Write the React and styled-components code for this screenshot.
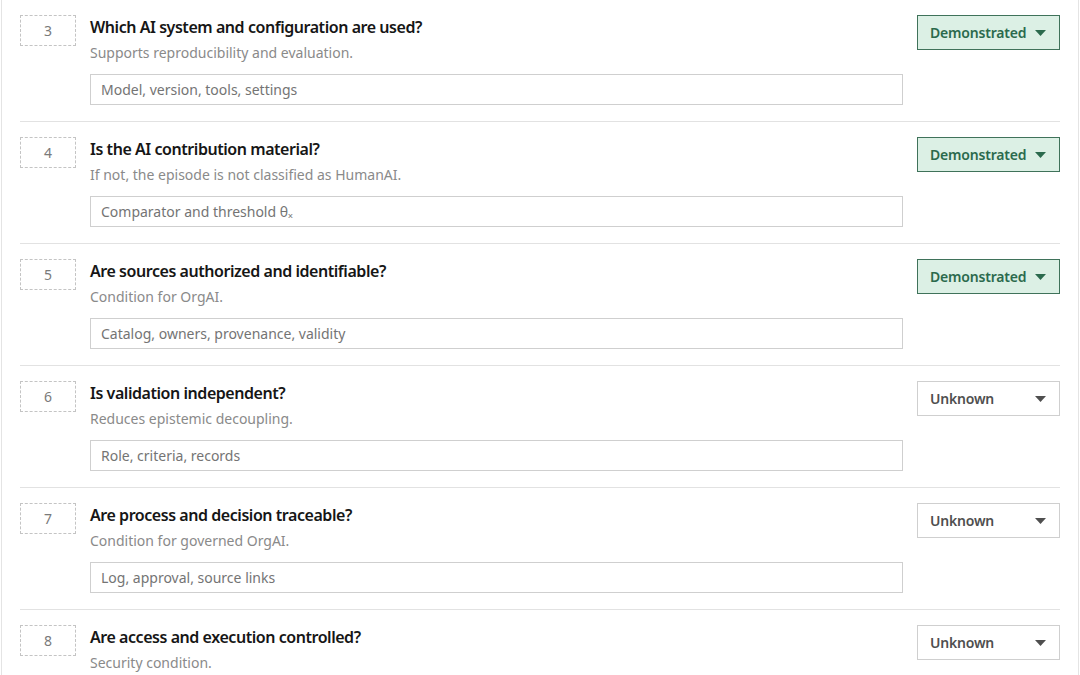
import React from "react";
import styled, { createGlobalStyle, css } from "styled-components";

const Global = createGlobalStyle`
  html, body { margin: 0; padding: 0; background: #ffffff; }
  body { font-family: "Noto Sans", "Open Sans", sans-serif; color: #161616; }
  * { box-sizing: border-box; }
`;

const Page = styled.div`
  width: 1080px;
  height: 675px;
  overflow: hidden;
  padding-left: 1px;
  padding-right: 1px;
`;

const Card = styled.section`
  border-left: 1px solid #e4e4e4;
  border-right: 1px solid #e4e4e4;
  padding: 0 18px;
  min-height: 675px;
`;

const Row = styled.div`
  display: grid;
  grid-template-columns: 56px 1fr 143px;
  column-gap: 14px;
  padding: 15px 0 16px;
  border-bottom: 1px solid #e2e2e2;
`;

const NumberBox = styled.div`
  height: 31px;
  border: 1px dashed #c4c4c4;
  display: flex;
  align-items: center;
  justify-content: center;
  font-size: 14px;
  color: #7a7a7a;
`;

const Body = styled.div`
  display: flex;
  flex-direction: column;
`;

const Title = styled.h3`
  margin: 0;
  font-size: 16px;
  line-height: 24px;
  font-weight: 600;
  letter-spacing: -0.45px;
  color: #161616;
`;

const Hint = styled.p`
  margin: 4px 0 0;
  font-size: 14px;
  line-height: 20px;
  color: #8a8a8a;
`;

const TextField = styled.input`
  margin-top: 11px;
  height: 31px;
  width: 100%;
  border: 1px solid #cfcfcf;
  background: #fff;
  padding: 0 10px;
  font-family: inherit;
  font-size: 14px;
  color: #161616;
  outline: none;
  &::placeholder { color: #747474; }
`;

const StatusSelect = styled.button`
  height: 35px;
  display: flex;
  align-items: center;
  justify-content: space-between;
  padding: 0 13px 0 12px;
  font-family: inherit;
  font-size: 14px;
  font-weight: 600;
  letter-spacing: -0.2px;
  cursor: pointer;
  ${({ $status }) =>
    $status === "demonstrated"
      ? css`
          background: #dcf0e5;
          border: 1px solid #3f725a;
          color: #2b6a4d;
        `
      : css`
          background: #ffffff;
          border: 1px solid #cfcfcf;
          color: #4f4f4f;
        `}
`;

const Caret = ({ color }) => (
  <svg width="11" height="6" viewBox="0 0 11 6" aria-hidden="true">
    <path d="M0 0 L11 0 L5.5 6 Z" fill={color} />
  </svg>
);

const items = [
  { n: 3, title: "Which AI system and configuration are used?", hint: "Supports reproducibility and evaluation.", ph: "Model, version, tools, settings", status: "demonstrated" },
  { n: 4, title: "Is the AI contribution material?", hint: "If not, the episode is not classified as HumanAI.", ph: "Comparator and threshold θₓ", status: "demonstrated" },
  { n: 5, title: "Are sources authorized and identifiable?", hint: "Condition for OrgAI.", ph: "Catalog, owners, provenance, validity", status: "demonstrated" },
  { n: 6, title: "Is validation independent?", hint: "Reduces epistemic decoupling.", ph: "Role, criteria, records", status: "unknown" },
  { n: 7, title: "Are process and decision traceable?", hint: "Condition for governed OrgAI.", ph: "Log, approval, source links", status: "unknown" },
  { n: 8, title: "Are access and execution controlled?", hint: "Security condition.", ph: "Roles, permissions, audit", status: "unknown" },
];

export default function App() {
  return (
    <>
      <Global />
      <Page>
        <Card>
          {items.map((it) => (
            <Row key={it.n}>
              <NumberBox>{it.n}</NumberBox>
              <Body>
                <Title>{it.title}</Title>
                <Hint>{it.hint}</Hint>
                <TextField placeholder={it.ph} />
              </Body>
              <StatusSelect $status={it.status}>
                <span>{it.status === "demonstrated" ? "Demonstrated" : "Unknown"}</span>
                <Caret color={it.status === "demonstrated" ? "#2b6a4d" : "#4f4f4f"} />
              </StatusSelect>
            </Row>
          ))}
        </Card>
      </Page>
    </>
  );
}
